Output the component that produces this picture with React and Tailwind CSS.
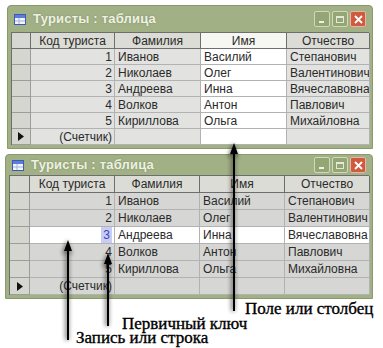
import React from "react";

const rows = [
  ["1", "Иванов", "Василий", "Степанович"],
  ["2", "Николаев", "Олег", "Валентинович"],
  ["3", "Андреева", "Инна", "Вячеславовна"],
  ["4", "Волков", "Антон", "Павлович"],
  ["5", "Кириллова", "Ольга", "Михайловна"],
];

const TableIcon = () => (
  <svg width="12" height="11" viewBox="0 0 12 11" className="shrink-0">
    <rect x="0.5" y="0.5" width="11" height="10" fill="#f4f6ff" stroke="#3b5bb5" />
    <rect x="1" y="1" width="10" height="3" fill="#5b7fd6" />
    <line x1="1" y1="7" x2="11" y2="7" stroke="#9fb0e0" />
    <line x1="5" y1="4" x2="5" y2="10" stroke="#9fb0e0" />
  </svg>
);

const WinButtons = () => (
  <div className="flex gap-[2px] mr-[3px]">
    <div className="w-[16px] h-[16px] rounded-[2px] border border-[#d0d9bd] bg-[#94a674] flex items-end pl-[4px] pb-[3px]">
      <div className="w-[5px] h-[2px] bg-[#eef2e4]" />
    </div>
    <div className="w-[16px] h-[16px] rounded-[2px] border border-[#d0d9bd] bg-[#94a674] flex items-center justify-center">
      <div className="w-[8px] h-[7px] border border-[#e4ead6] border-t-2" />
    </div>
    <div className="w-[16px] h-[16px] rounded-[2px] border border-[#e8b6a6] bg-[#cf5a3e] flex items-center justify-center">
      <svg width="9" height="9" viewBox="0 0 9 9">
        <path d="M1 1 L8 8 M8 1 L1 8" stroke="#fff" strokeWidth="1.8" />
      </svg>
    </div>
  </div>
);

const Window = ({ cols, rowH, titleH, cellBg, whiteCol, whiteRow, className }) => {
  const cellBase = "border-r border-b border-[#b2b2b2] px-[3px] truncate";
  return (
    <div className={"bg-[#a2b086] border border-[#8a9a6c] rounded-t-[4px] px-[3px] pb-[3px] " + className}>
      <div className="flex items-center" style={{ height: titleH }}>
        <div className="ml-[3px] mr-[7px]">
          <TableIcon />
        </div>
        <div className="flex-1 text-[13px] font-bold text-[#eef1e2] tracking-[0.2px] [text-shadow:0_0_2px_#7d8c60]">
          Туристы : таблица
        </div>
        <WinButtons />
      </div>
      <div className={"grid border-t border-l border-[#6e6e6e] text-[12px] text-[#2a2a2a] " + cols} style={{ gridAutoRows: rowH }}>
        <div className="bg-[#d8d8d2] border-r border-b border-[#6e6e6e]" />
        {["Код туриста", "Фамилия", "Имя", "Отчество"].map((h, i) => (
          <div
            key={h}
            className={
              "border-r border-b border-[#6e6e6e] text-center leading-[17px] " +
              (i + 1 === whiteCol ? "bg-[#f6f6f2]" : "bg-[#dcdcd6]")
            }
          >
            {h}
          </div>
        ))}
        {rows.map((r, ri) => (
          <React.Fragment key={ri}>
            <div className="bg-[#d6d6d0] border-r border-b border-[#9c9c9c]" />
            {r.map((c, ci) => {
              const white = ci + 1 === whiteCol || ri === whiteRow;
              return (
                <div
                  key={ci}
                  className={
                    cellBase +
                    " flex items-center " +
                    (ci === 0 ? "justify-end pr-[2px] " : "") +
                    (white ? "bg-white" : cellBg)
                  }
                >
                  {ci === 0 && ri === whiteRow ? (
                    <span className="bg-[#c9cdf2] text-[#3a44c4] px-[2px]">{c}</span>
                  ) : (
                    c
                  )}
                </div>
              );
            })}
          </React.Fragment>
        ))}
        <div className="bg-[#d6d6d0] border-r border-b border-[#9c9c9c] flex items-center justify-center">
          <svg width="6" height="9" viewBox="0 0 6 9">
            <path d="M0 0 L6 4.5 L0 9 Z" fill="#111" />
          </svg>
        </div>
        <div className={cellBase + " flex items-center justify-end pr-[2px] " + cellBg}>(Счетчик)</div>
        <div className={cellBase + " " + cellBg} />
        <div className={cellBase + " " + (whiteCol === 3 ? "bg-white" : cellBg)} />
        <div className={cellBase + " " + cellBg} />
      </div>
    </div>
  );
};

const Arrow = ({ x, y1, y2 }) => (
  <g>
    <g filter="url(#blur)" opacity="0.55">
      <line x1={x - 1} y1={y1 + 6} x2={x - 1} y2={y2} stroke="#222" strokeWidth="4" />
      <path d={`M${x - 6} ${y1 + 14} L${x - 1} ${y1} L${x + 4} ${y1 + 14} Z`} fill="#111" />
    </g>
    <line x1={x} y1={y1 + 6} x2={x} y2={y2} stroke="#000" strokeWidth="2" />
    <path d={`M${x - 4} ${y1 + 11} L${x} ${y1} L${x + 4} ${y1 + 11} Z`} fill="#000" />
  </g>
);

export default function App() {
  return (
    <div className="relative w-[383px] h-[348px] bg-white overflow-hidden [font-family:'Liberation_Sans',Arial,sans-serif]">
      <div className="pt-[5px] flex flex-col gap-[5px]">
        <Window
          className="ml-[7px] w-[366px]"
          cols="grid-cols-[19px_84px_86px_86px_83px]"
          rowH="16px"
          titleH="26px"
          cellBg="bg-[#e2e2e0]"
          whiteCol={3}
          whiteRow={-1}
        />
        <Window
          className="ml-[5px] w-[368px]"
          cols="grid-cols-[20px_85px_85px_85px_85px]"
          rowH="17px"
          titleH="20px"
          cellBg="bg-[#d6d6d4]"
          whiteCol={-1}
          whiteRow={2}
        />
      </div>
      <div className="mt-[3px] text-[17px] leading-[14.5px] text-black [-webkit-text-stroke:0.35px_black] [font-family:'Liberation_Serif','Times_New_Roman',serif]">
        <div className="pl-[245px]">Поле или столбец</div>
        <div className="pl-[122px]">Первичный ключ</div>
        <div className="pl-[76px]">Запись или строка</div>
      </div>
      <svg className="absolute inset-0 pointer-events-none" width="383" height="348">
        <defs>
          <filter id="blur" x="-2" y="-1" width="5" height="3">
            <feGaussianBlur stdDeviation="2.2" />
          </filter>
        </defs>
        <Arrow x={234} y1={143} y2={311} />
        <Arrow x={108} y1={253} y2={326} />
        <Arrow x={68} y1={240} y2={340} />
      </svg>
    </div>
  );
}
